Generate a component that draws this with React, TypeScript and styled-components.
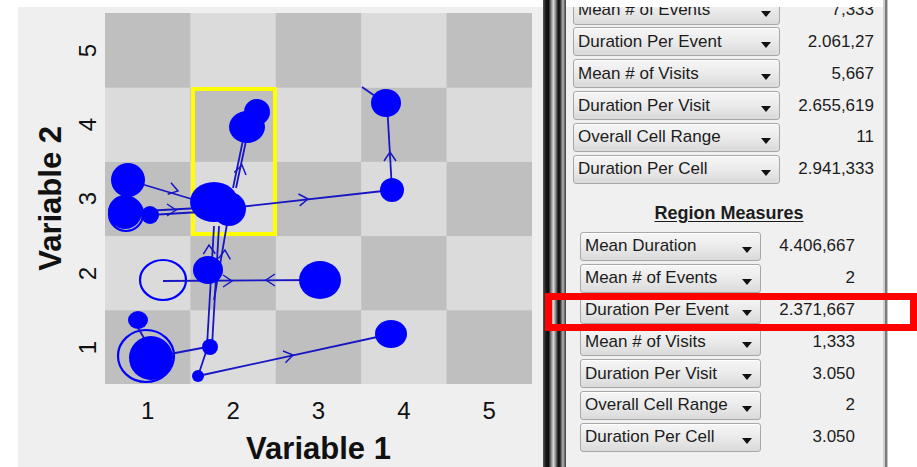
import styled, { createGlobalStyle } from 'styled-components';

const GlobalStyle = createGlobalStyle`
	html,
	body {
		margin: 0;
		padding: 0;
		background: #ffffff;
	}
	body {
		width: 917px;
		height: 467px;
		overflow: hidden;
		font-family: 'Liberation Sans', Arial, sans-serif;
	}
`;

const Screen = styled.div`
	position: relative;
	display: flex;
	width: 917px;
	height: 467px;
	background: #ffffff;
	overflow: hidden;
`;

const PlotPanel = styled.section`
	flex-shrink: 0;
	width: 525px;
	margin: 7px 0 0 18px;
	padding-top: 6px;
	background: #efefef;
	display: grid;
	grid-template-columns: 58px 29px 427px;
	grid-template-rows: 371px 50px 30px;
	align-content: start;
	color: #111;
`;

const YTitle = styled.div`
	grid-column: 1;
	grid-row: 1;
	justify-self: center;
	align-self: center;
	margin-left: 6px;
	writing-mode: vertical-rl;
	transform: rotate(180deg);
	font-size: 31px;
	font-weight: bold;
	line-height: 31px;
	white-space: nowrap;
`;

const YTicks = styled.div`
	grid-column: 2;
	grid-row: 1;
	display: flex;
	flex-direction: column-reverse;
`;

const YTick = styled.div`
	flex: 1;
	width: 24px;
	display: flex;
	align-items: center;
	justify-content: center;
	writing-mode: vertical-rl;
	transform: rotate(180deg);
	font-size: 24px;
	line-height: 24px;
`;

const PlotArea = styled.svg`
	grid-column: 3;
	grid-row: 1;
	display: block;
`;

const XTicks = styled.div`
	grid-column: 3;
	grid-row: 2;
	padding-top: 4px;
	display: grid;
	grid-template-columns: repeat(5, 1fr);
	align-items: center;
	justify-items: center;
	font-size: 24px;
	line-height: 24px;
`;

const XTitle = styled.div`
	grid-column: 3;
	grid-row: 3;
	text-align: center;
	font-size: 31px;
	font-weight: bold;
	line-height: 30px;
	white-space: nowrap;
`;

const Splitter = styled.div`
	flex-shrink: 0;
	width: 23px;
	height: 467px;
	background: linear-gradient(
		to right,
		#5a5a5a 0%,
		#1a1a1a 12%,
		#0c0c0c 24%,
		#9a9a9a 38%,
		#d8d8d8 46%,
		#7c7c7c 56%,
		#101010 66%,
		#202020 74%,
		#b4b4b4 86%,
		#6e6e6e 94%,
		#3a3a3a 100%
	);
`;

const StatsPanel = styled.section`
	flex-shrink: 0;
	width: 317px;
	height: 460px;
	margin-top: 7px;
	background: #f0f0f0;
	overflow: hidden;
	color: #1c1c1c;
`;

const ScrolledContent = styled.div`
	margin-top: -11.5px;
`;

const MeasureList = styled.div<{ $left: number; $right: number; $button: number }>`
	display: flex;
	flex-direction: column;
	gap: 2.85px;
	padding: 0 ${(p) => p.$right}px 0 ${(p) => p.$left}px;
	--button-width: ${(p) => p.$button}px;
`;

const MeasureRow = styled.div`
	display: grid;
	grid-template-columns: var(--button-width) 1fr;
	height: 29px;
	align-items: center;
`;

const DropButton = styled.div`
	box-sizing: border-box;
	height: 29px;
	display: flex;
	align-items: center;
	padding-left: 4px;
	border: 1px solid #a8a8a8;
	border-radius: 3px;
	background: linear-gradient(to bottom, #f6f6f6 0%, #ececec 45%, #dadada 100%);
	box-shadow: inset 0 1px 0 #ffffff;
	font-size: 17px;
	white-space: nowrap;
`;

const Caret = styled.span`
	width: 0;
	height: 0;
	margin: 7px 8px 0 auto;
	border-left: 5px solid transparent;
	border-right: 5px solid transparent;
	border-top: 6px solid #111;
`;

const Value = styled.div`
	text-align: right;
	font-size: 17px;
	white-space: nowrap;
`;

const SectionTitle = styled.div`
	margin: 18px 0 8px;
	padding-left: 9px;
	text-align: center;
	font-size: 18px;
	line-height: 22px;
	font-weight: bold;
	text-decoration: underline;
	text-underline-offset: 2px;
`;

const RightEdge = styled.div`
	flex-shrink: 0;
	width: 5px;
	height: 467px;
	background: linear-gradient(to right, #cfcfcf 0 2px, #7a7a7a 2px 4px, #c4c4c4 4px 5px);
`;

const Highlight = styled.div`
	position: absolute;
	left: 545px;
	top: 293px;
	width: 372px;
	height: 38px;
	box-sizing: border-box;
	border: 7px solid #ff0000;
	pointer-events: none;
`;

type Measure = { label: string; value: string };

const overallMeasures: Measure[] = [
	{ label: 'Mean # of Events', value: '7,333' },
	{ label: 'Duration Per Event', value: '2.061,27' },
	{ label: 'Mean # of Visits', value: '5,667' },
	{ label: 'Duration Per Visit', value: '2.655,619' },
	{ label: 'Overall Cell Range', value: '11' },
	{ label: 'Duration Per Cell', value: '2.941,333' },
];

const regionMeasures: Measure[] = [
	{ label: 'Mean Duration', value: '4.406,667' },
	{ label: 'Mean # of Events', value: '2' },
	{ label: 'Duration Per Event', value: '2.371,667' },
	{ label: 'Mean # of Visits', value: '1,333' },
	{ label: 'Duration Per Visit', value: '3.050' },
	{ label: 'Overall Cell Range', value: '2' },
	{ label: 'Duration Per Cell', value: '3.050' },
];

// plot geometry in page pixels
const GX = 105;
const GY = 13;
const CW = 85.4;
const CH = 74.2;

const cells: { x: number; y: number; dark: boolean }[] = [];
for (let c = 1; c <= 5; c++) {
	for (let r = 1; r <= 5; r++) {
		cells.push({ x: GX + (c - 1) * CW, y: GY + (5 - r) * CH, dark: (c + r) % 2 === 0 });
	}
}

const links: [number, number, number, number][] = [
	[128, 180, 205, 203],
	[125, 212, 200, 208],
	[150, 215, 200, 212],
	[240, 207, 392, 190],
	[392, 190, 387, 103],
	[233, 188, 243, 140],
	[236, 188, 246, 141],
	[163, 281, 320, 280],
	[214, 226, 207, 346],
	[219, 226, 212, 346],
	[227, 224, 214, 300],
	[208, 346, 198, 376],
	[198, 376, 391, 334],
	[170, 354, 207, 347],
	[362, 87, 375, 96],
	[138, 328, 144, 338],
];

const arrows: [number, number, number][] = [
	[178, 191, 16],
	[176, 210, 0],
	[308, 199, -6],
	[390, 152, -90],
	[242, 165, -78],
	[232, 281, 0],
	[266, 280, 180],
	[209, 245, -92],
	[225, 250, -86],
	[293, 355, -12],
];

const dots: [number, number, number, number][] = [
	[257, 112, 13, 13],
	[247, 127, 18, 16],
	[214, 202, 24, 20],
	[229, 209, 17, 17],
	[128, 180, 17, 17],
	[125, 212, 17, 17],
	[150, 215, 9, 9],
	[392, 190, 12, 12],
	[386, 103, 15, 14],
	[208, 270, 15, 14],
	[320, 280, 21, 19],
	[210, 347, 8, 8],
	[198, 376, 6, 6],
	[391, 334, 16, 14],
	[151, 358, 22, 22],
	[138, 320, 10, 9],
];

const rings: [number, number, number, number][] = [
	[126, 214, 17, 17],
	[163, 280, 23, 20],
	[146, 356, 28, 26],
];

const LINE = '#1616c4';
const DOT = '#0000ff';

const TrajectoryPlot = () => (
	<PlotArea width={427} height={371} viewBox={`${GX} ${GY} 427 371`}>
		{cells.map((cell, i) => (
			<rect key={i} x={cell.x} y={cell.y} width={CW + 0.5} height={CH + 0.5} fill={cell.dark ? '#bfbfbf' : '#dbdbdb'} />
		))}
		<rect x={193} y={89} width={82} height={145} fill='none' stroke='#ffff00' strokeWidth={4} />
		{rings.map(([x, y, rx, ry], i) => (
			<ellipse key={'r' + i} cx={x} cy={y} rx={rx} ry={ry} fill='none' stroke={DOT} strokeWidth={2.2} />
		))}
		{links.map(([x1, y1, x2, y2], i) => (
			<line key={'l' + i} x1={x1} y1={y1} x2={x2} y2={y2} stroke={LINE} strokeWidth={1.8} />
		))}
		{arrows.map(([x, y, a], i) => (
			<path
				key={'a' + i}
				d='M-9,-6 L0,0 L-9,6'
				transform={`translate(${x} ${y}) rotate(${a})`}
				fill='none'
				stroke={LINE}
				strokeWidth={1.5}
			/>
		))}
		{dots.map(([x, y, rx, ry], i) => (
			<ellipse key={'d' + i} cx={x} cy={y} rx={rx} ry={ry} fill={DOT} />
		))}
	</PlotArea>
);

const MeasureBlock = ({ items, left, right, button }: { items: Measure[]; left: number; right: number; button: number }) => (
	<MeasureList $left={left} $right={right} $button={button}>
		{items.map((m, i) => (
			<MeasureRow key={i}>
				<DropButton>
					{m.label}
					<Caret />
				</DropButton>
				<Value>{m.value}</Value>
			</MeasureRow>
		))}
	</MeasureList>
);

export default function App() {
	return (
		<>
			<GlobalStyle />
			<Screen>
				<PlotPanel>
					<YTitle>Variable 2</YTitle>
					<YTicks>
						{[1, 2, 3, 4, 5].map((n) => (
							<YTick key={n}>{n}</YTick>
						))}
					</YTicks>
					<TrajectoryPlot />
					<XTicks>
						{[1, 2, 3, 4, 5].map((n) => (
							<span key={n}>{n}</span>
						))}
					</XTicks>
					<XTitle>Variable 1</XTitle>
				</PlotPanel>
				<Splitter />
				<StatsPanel>
					<ScrolledContent>
						<MeasureBlock items={overallMeasures} left={7} right={9} button={207} />
						<SectionTitle>Region Measures</SectionTitle>
						<MeasureBlock items={regionMeasures} left={14} right={28} button={181} />
					</ScrolledContent>
				</StatsPanel>
				<RightEdge />
				<Highlight />
			</Screen>
		</>
	);
}
